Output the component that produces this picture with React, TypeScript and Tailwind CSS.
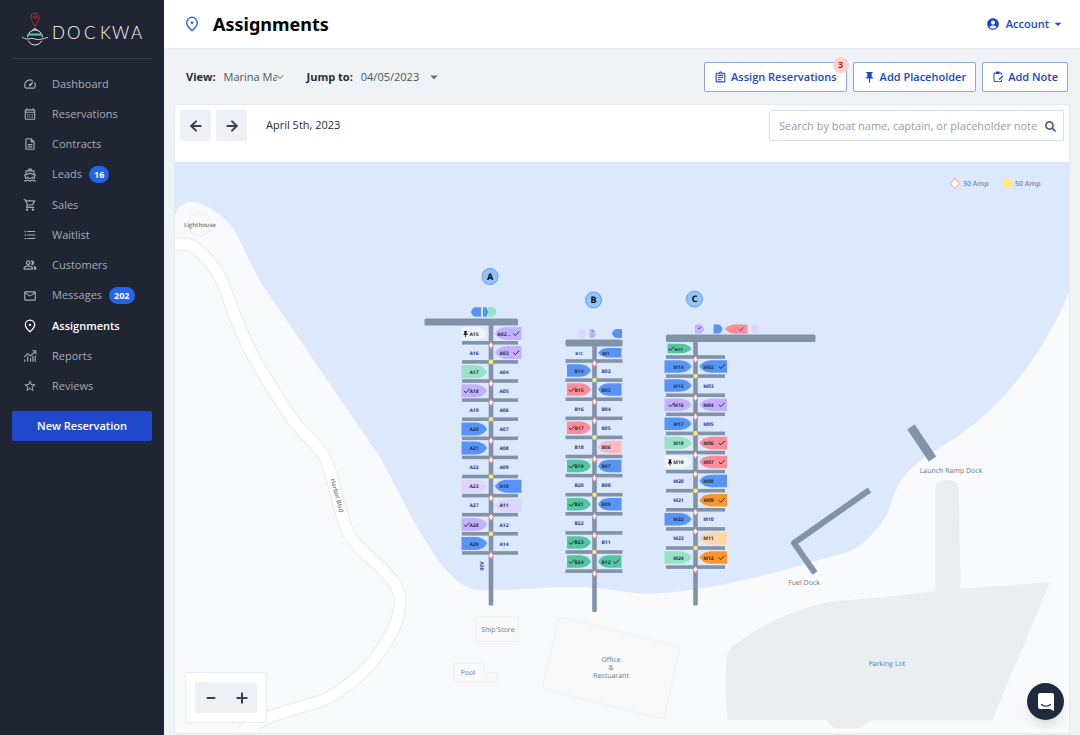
import { useState } from "react";
import type { ComponentType } from "react";
import { ArrowLeft, ArrowRight, ChevronDown, Minus, Plus } from "lucide-react";
import { FaSearch } from "react-icons/fa";
import {
    MdAccountCircle,
    MdArrowDropDown,
    MdFormatListBulleted,
    MdOutlineAssignment,
    MdOutlineCalendarMonth,
    MdOutlineDescription,
    MdOutlineDirectionsBoat,
    MdOutlineMail,
    MdOutlinePeopleAlt,
    MdOutlineShoppingCart,
    MdOutlineSpeed,
    MdPushPin,
    MdStarOutline,
} from "react-icons/md";

type Icon = ComponentType<{ className?: string }>;

const PlaceIcon = ({ className }: { className?: string }) => (
    <svg viewBox="0 0 24 24" fill="none" stroke="currentColor" className={className}>
        <path d="M12 22c-4.500-4-8-8-8-12a8 8 0 0 1 16 0c0 4-3.500 8-8 12z" strokeWidth="2.200" />
        <circle cx="12" cy="10" r="2" fill="currentColor" stroke="none" />
    </svg>
);

const ReportsIcon = ({ className }: { className?: string }) => (
    <svg viewBox="0 0 24 24" fill="none" stroke="currentColor" className={className}>
        <path d="M2 14l6-6 5 4 8-8" strokeWidth="2" />
        <path d="M16 3h6v6" strokeWidth="2" />
        <path d="M3 22v-4M8 22v-9M13 22v-6M17 22V12M21 22V11" strokeWidth="2" />
    </svg>
);

const NoteIcon = ({ className }: { className?: string }) => (
    <svg viewBox="0 0 24 24" fill="none" stroke="currentColor" strokeWidth="2" className={className}>
        <path d="M12 21H4V4h15v4" />
        <path d="M8 1h7v5H8z" fill="currentColor" stroke="none" />
        <path d="M13 21h6v-4" />
        <path d="M14 17l8-7" strokeWidth="3" />
    </svg>
);

interface NavItem {
    label: string;
    icon: Icon;
    badge?: number;
}

const navItems: NavItem[] = [
    { label: "Dashboard", icon: MdOutlineSpeed },
    { label: "Reservations", icon: MdOutlineCalendarMonth },
    { label: "Contracts", icon: MdOutlineDescription },
    { label: "Leads", icon: MdOutlineDirectionsBoat, badge: 16 },
    { label: "Sales", icon: MdOutlineShoppingCart },
    { label: "Waitlist", icon: MdFormatListBulleted },
    { label: "Customers", icon: MdOutlinePeopleAlt },
    { label: "Messages", icon: MdOutlineMail, badge: 202 },
    { label: "Assignments", icon: PlaceIcon },
    { label: "Reports", icon: ReportsIcon },
    { label: "Reviews", icon: MdStarOutline },
];

const Logo = () => (
    <svg viewBox="0 0 124 36" className="w-[124px] h-[36px]" fill="none">
        <path d="M14 15.500c-2-4-4-6-4-9.500a4 4 0 0 1 8 0c0 3.500-2 5.500-4 9.500z" stroke="#c0272d" />
        <circle cx="14" cy="6" r="1.500" stroke="#c0272d" />
        <circle cx="14" cy="26.500" r="7.500" stroke="#e5e7eb" />
        <path d="M8 22.500h12l1 2H7z" fill="#4fd1b5" />
        <path
            d="M1 26.500c2 0 3 2 6 1.500s4-1 7 0 4 .5 7 0 4-1.500 6-1.500"
            stroke="#1f2532"
            strokeWidth="3"
        />
        <path d="M1 26.500c2 0 3 2 6 1.500s4-1 7 0 4 .5 7 0 4-1.500 6-1.500" stroke="#d1d5db" />
        <path d="M11.500 19l2.500-1.500 2.500 1.500" stroke="#e5e7eb" />
        <text
            x="31 46 63 79 91 110"
            y="28"
            fill="#fff"
            fontSize="17"
            className="font-['Lato',sans-serif] font-light"
        >
            DOCKWA
        </text>
    </svg>
);

const Sidebar = () => (
    <aside className="w-[164px] shrink-0 bg-[#1f2532] px-3 flex flex-col">
        <div className="h-[59px] pt-[11px] pl-[9px] border-b border-[#343b4a]">
            <a href="#" aria-label="Dockwa home" className="block">
                <Logo />
            </a>
        </div>
        <nav className="flex flex-col pt-[10px]">
            {navItems.map(({ label, icon: ItemIcon, badge }) => {
                const active = label === "Assignments";
                return (
                    <a
                        key={label}
                        href="#"
                        aria-current={active ? "page" : undefined}
                        className={`flex items-center pl-[11px] text-[11px] ${badge ? "h-[31px]" : "h-[30px]"} ${
                            active ? "text-white font-semibold" : "text-[#a3acba]"
                        }`}
                    >
                        <ItemIcon className="size-[14px] mr-[15px]" />
                        {label}
                        {badge && (
                            <span className="ml-[7px] px-[5px] h-[17px] leading-[17px] rounded-full bg-[#2563eb] text-white text-[9px] font-bold">
                                {badge}
                            </span>
                        )}
                    </a>
                );
            })}
        </nav>
        <button className="mt-[10px] h-[30px] rounded-xs bg-[#1f48cc] text-white text-[11px] font-semibold">
            New Reservation
        </button>
    </aside>
);

const boatColors = {
    blue: "#5894f8",
    mint: "#98e3c5",
    purple: "#c4b1fc",
    lilac: "#ddd5fd",
    green: "#52c5a2",
    red: "#fb8c98",
    pink: "#fdb9bf",
    orange: "#fd9527",
    peach: "#fdd5a6",
    white: "#f2f3f5",
};

type BoatColor = keyof typeof boatColors;

interface Slip {
    name: string;
    boat?: BoatColor;
    mark?: "check" | "pin";
}

const slip = (name: string, boat?: BoatColor, mark?: "check" | "pin"): Slip => ({ name, boat, mark });

interface Pier {
    id: string;
    x: number;
    labelY: number;
    head: [number, number, number, number];
    end: number;
    firstFinger: number;
    fingers: [number, number];
    rows: number[];
    reach: [number, number];
    left: (Slip | null)[];
    right: (Slip | null)[];
}

const SPACING = 19.1;

const rowsFrom = (first: number, count: number) => Array.from({ length: count }, (_, i) => first + i * SPACING);

const piers: Pier[] = [
    {
        id: "A",
        x: 491,
        labelY: 276.500,
        head: [424.500, 318.500, 93.500, 7],
        end: 605.500,
        firstFinger: 342.800,
        fingers: [462, 518],
        rows: rowsFrom(333.500, 12),
        reach: [461.500, 521.500],
        left: [
            slip("A15", "white", "pin"),
            slip("A16"),
            slip("A17", "mint"),
            slip("A18", "purple", "check"),
            slip("A19"),
            slip("A20", "blue"),
            slip("A21", "blue"),
            slip("A22"),
            slip("A23", "lilac"),
            slip("A27"),
            slip("A28", "purple", "check"),
            slip("A29", "blue"),
        ],
        right: [
            slip("A02 ..", "purple", "check"),
            slip("A03", "purple", "check"),
            slip("A04"),
            slip("A05"),
            slip("A06"),
            slip("A07"),
            slip("A08"),
            slip("A09"),
            slip("A10", "blue"),
            slip("A11", "lilac"),
            slip("A12"),
            slip("A14"),
        ],
    },
    {
        id: "B",
        x: 594.500,
        labelY: 300,
        head: [565.500, 339.500, 57, 7],
        end: 612,
        firstFinger: 361,
        fingers: [565.500, 622.500],
        rows: [352.800, ...rowsFrom(370.500, 11)],
        reach: [567, 621.500],
        left: [
            slip("B13"),
            slip("B14", "blue"),
            slip("B15", "red", "check"),
            slip("B16"),
            slip("B17", "red", "check"),
            slip("B18"),
            slip("B19", "green", "check"),
            slip("B20"),
            slip("B21", "green", "check"),
            slip("B22"),
            slip("B23", "green", "check"),
            slip("B24", "green", "check"),
        ],
        right: [
            slip("B01", "blue"),
            slip("B02"),
            slip("B03", "blue"),
            slip("B04"),
            slip("B05"),
            slip("B06", "pink"),
            slip("B07", "blue"),
            slip("B08"),
            slip("B09", "blue"),
            null,
            slip("B11"),
            slip("B12", "green", "check"),
        ],
    },
    {
        id: "C",
        x: 695.500,
        labelY: 299,
        head: [666, 334.500, 149.500, 7.500],
        end: 605.500,
        firstFinger: 357,
        fingers: [666, 725],
        rows: [348.500, ...rowsFrom(366.500, 11)],
        reach: [664.500, 727],
        left: [
            slip("M13", "green", "check"),
            slip("M14", "blue"),
            slip("M15", "blue"),
            slip("M16", "purple", "check"),
            slip("M17", "blue"),
            slip("M18", "mint"),
            slip("M19", "white", "pin"),
            slip("M20"),
            slip("M21"),
            slip("M22", "blue"),
            slip("M23"),
            slip("M24", "mint"),
        ],
        right: [
            null,
            slip("M02", "blue", "check"),
            slip("M03"),
            slip("M04", "purple", "check"),
            slip("M05"),
            slip("M06", "red", "check"),
            slip("M07", "red", "check"),
            slip("M08", "blue"),
            slip("M09", "orange", "check"),
            slip("M10"),
            slip("M11", "peach"),
            slip("M12", "orange", "check"),
        ],
    },
];

// Hull with a flat stern at `stern` and a rounded bow at `bow`
const hull = (stern: number, bow: number, y: number, h: number) => {
    const shoulder = stern + (bow - stern) * 0.55;
    const bend = stern + (bow - stern) * 0.85;
    const r = h / 2;
    return `M${stern} ${y - r}H${shoulder}Q${bend} ${y - r} ${bow} ${y}Q${bend} ${y + r} ${shoulder} ${y + r}H${stern}Z`;
};

const Check = ({ x, y }: { x: number; y: number }) => (
    <path d={`M${x - 2.500} ${y}l1.800 2 4-4`} fill="none" stroke="#262f3d" strokeWidth="1" />
);

const Pin = ({ x, y }: { x: number; y: number }) => (
    <path
        d={`M${x - 1.500} ${y - 2.500}h3v0.800h-0.500v1.500l1 1v0.600h-1.600v2h-0.800v-2h-1.600v-0.600l1-1v-1.500h-0.500z`}
        fill="#111827"
    />
);

const SlipShape = ({ data, pier, y, side, small }: { data: Slip; pier: Pier; y: number; side: number; small: boolean }) => {
    const stern = side < 0 ? pier.reach[0] : pier.reach[1];
    const bow = pier.x + side * (pier.id === "B" ? 3.500 : 3.800);
    const inset = small && pier.id === "C" ? 3 : 0;
    const height = small ? 9.500 : pier.id === "A" ? 13 : 12.500;
    const offset = pier.id === "B" ? 11.500 : side < 0 ? 17 : 13;
    const textX = pier.x + side * (side < 0 && pier.id === "B" ? 15.500 : offset);
    const markX = side < 0 ? textX - 7.500 : stern - 5.500;
    return (
        <g>
            {data.boat && <path d={hull(stern + inset, bow, y, height)} fill={boatColors[data.boat]} />}
            <text
                x={textX}
                y={y + 2}
                textAnchor="middle"
                fontSize={small ? 4 : 5}
                fill={data.boat ? "#28324a" : "#263c96"}
                className="font-bold"
            >
                {data.name}
            </text>
            {data.mark === "check" && <Check x={markX} y={y} />}
            {data.mark === "pin" && <Pin x={markX - 1} y={y} />}
        </g>
    );
};

const Amp30 = ({ x, y }: { x: number; y: number }) => (
    <path d={`M${x} ${y - 3.400}l2.300 3.400-2.300 3.400-2.300-3.400z`} fill="#fff" stroke="#f47c80" strokeWidth="0.800" />
);

const PierShape = ({ pier }: { pier: Pier }) => {
    const [hx, hy, hw, hh] = pier.head;
    return (
        <g>
            <rect x={hx} y={hy} width={hw} height={hh} rx="1.500" fill="#8293a9" />
            <rect x={pier.x - 2.300} y={hy + 3} width="4.600" height={pier.end - hy - 3} rx="1" fill="#8293a9" />
            {Array.from({ length: 12 }, (_, i) => (
                <rect
                    key={i}
                    x={pier.fingers[0]}
                    y={pier.firstFinger + i * SPACING - 1.800}
                    width={pier.fingers[1] - pier.fingers[0]}
                    height="3.600"
                    fill="#8293a9"
                />
            ))}
            {Array.from({ length: 12 }, (_, i) => {
                const y = pier.firstFinger + i * SPACING;
                return i % 3 === 1 ? (
                    <circle key={i} cx={pier.x} cy={y} r="2.300" fill="#fbe773" />
                ) : (
                    <Amp30 key={i} x={pier.x} y={y + 2.500} />
                );
            })}
            {pier.rows.map((y, i) => {
                const left = pier.left[i];
                const right = pier.right[i];
                const small = i === 0 && pier.id !== "A";
                return (
                    <g key={i}>
                        {left && <SlipShape data={left} pier={pier} y={y} side={-1} small={small} />}
                        {right && <SlipShape data={right} pier={pier} y={y} side={1} small={small} />}
                    </g>
                );
            })}
            <circle cx={pier.x - 1} cy={pier.labelY} r="8" fill="#93c3fb" stroke="#639cf4" strokeWidth="1" />
            <text x={pier.x - 1} y={pier.labelY + 3} textAnchor="middle" fontSize="9" fill="#000" className="font-bold">
                {pier.id}
            </text>
        </g>
    );
};

const ROAD =
    "M170 244H184C192 244 197 249 202 254C210 261 216 269 221 279C229 297 236 322 248 346C258 366 276 395 293 420C302 432 316 443 324 456C334 474 337 505 347 530C356 551 383 565 394 583C404 598 400 608 396 622C391 638 375 660 364 671C352 682 334 697 318 702C302 707 286 711 272 716C260 721 250 726 238 735";

const MarinaMap = () => (
    <svg
        viewBox="175 162 894 567"
        className="block w-full h-auto bg-[#f9fafb] [text-rendering:geometricPrecision]"
        role="img"
        aria-label="Marina map"
    >
        <path
            d="M174 162H1070V290C1056 325 1032 366 1000 400C978 424 950 442 936 450C918 461 901 474 893 497C889 512 884 522 873 533C860 550 845 553 830 557C800 566 760 577 734 582C700 590 660 595 635 593C612 591 605 587 575 587C540 587 520 590 485 590C466 590 459 585 440 563C415 528 400 494 381 459L261 283C246 256 243 244 232 227C226 218 206 202 191 202C181 202 174 211 174 222Z"
            fill="#dce9fd"
        />

        {/* Harbor Blvd */}
        <g fill="none" strokeLinejoin="round">
            <path d={ROAD} stroke="#ebebeb" strokeWidth="13" />
            <path d={ROAD} stroke="#fff" strokeWidth="11" />
        </g>

        {/* Parking lot and ramp */}
        <path
            d="M728 720Q724 690 726 665Q726 652 732 647Q770 616 824 603Q830 601 850 600Q900 596 935.500 591V487Q936 480 947 480Q958 480 959 487L960.500 588.500L1050 582.500L992 720.500H871L859 728.700H835L826 720Z"
            fill="#ebeef0"
        />

        {/* Buildings */}
        <g fill="#f9f9f9" stroke="#f0f0f1" strokeWidth="1">
            <circle cx="199.500" cy="224" r="12" />
            <rect x="475.500" y="616.500" width="42.500" height="25" />
            <path d="M453.500 663.500h31v9h12.500v9.500h-43.500z" />
            <path d="M565 618L676 646Q681 648 679 653L665 715Q664 719 659 718L547 690Q542 688 543 684L558 622Q560 617 565 618Z" />
        </g>

        {/* Standalone docks */}
        <g fill="none" stroke="#8293a9" strokeLinejoin="round">
            <path d="M911 427L932.500 459" strokeWidth="9" />
            <path d="M869.500 490L794 543L815 573" strokeWidth="6" />
        </g>

        {/* T-head boats */}
        <path d={hull(481, 471, 312, 9.500)} fill={boatColors.blue} />
        <path d={hull(483, 488, 312, 9.500)} fill={boatColors.blue} />
        <path d={hull(488, 496.500, 312, 9.500)} fill={boatColors.mint} />
        <path d={hull(579, 586, 333.500, 9)} fill={boatColors.lilac} />
        <path d={hull(589.500, 595.500, 333.500, 9)} fill={boatColors.purple} />
        <path d={hull(622, 612, 333.500, 9)} fill={boatColors.blue} />
        <path d={hull(695, 704, 329, 9)} fill={boatColors.purple} />
        <path d={hull(713.500, 722.500, 329, 9)} fill={boatColors.blue} />
        <path d={hull(747.500, 725, 329, 9)} fill={boatColors.red} />
        <path d={hull(758.500, 750.500, 329, 9)} fill={boatColors.lilac} />
        <path d="M698 328l1 1 2-2.500M739 329l1.500 1.500 3-3M592 331l.5.5 1-1" fill="none" stroke="#44405f" strokeWidth="0.800" />

        {piers.map((pier) => (
            <PierShape key={pier.id} pier={pier} />
        ))}
        <text transform="translate(480 566) rotate(90)" textAnchor="middle" fontSize="5" fill="#263c96" className="font-bold">
            A30
        </text>

        <g fill="#6b798d" fontSize="7" textAnchor="middle">
            <text x="200" y="227" fontSize="6" className="font-semibold">Lighthouse</text>
            <text transform="translate(335 496) rotate(75)" fontSize="6" className="font-semibold">Harbor Blvd</text>
            <text x="498" y="632">Ship Store</text>
            <text x="468" y="675">Pool</text>
            <text x="611" y="662">Office</text>
            <text x="611" y="670">&amp;</text>
            <text x="611" y="678">Restuarant</text>
            <text x="951" y="473">Launch Ramp Dock</text>
            <text x="804" y="585">Fuel Dock</text>
            <text x="887" y="666">Parking Lot</text>
        </g>

        {/* Legend */}
        <path d="M955 178l4.500 5.500-4.500 5.500-4.500-5.500z" fill="#fff" stroke="#f87c80" strokeWidth="0.800" />
        <circle cx="1007.500" cy="183.500" r="5" fill="#fdec80" />
        <g fill="#76849a" fontSize="7" className="font-semibold">
            <text x="963" y="186">30 Amp</text>
            <text x="1015" y="186">50 Amp</text>
        </g>
    </svg>
);

const outlineButton =
    "relative flex items-center h-[30px] px-[9px] gap-1 rounded-xs border border-[#8fa3df] bg-white text-[#1d46c8] text-[11px] font-semibold";

const App = () => {
    const [query, setQuery] = useState("");

    return (
        <div className="flex min-h-screen overflow-hidden bg-[#eff3f6] text-[#272c35] text-[11px] font-['Open_Sans','Noto_Sans',sans-serif]">
            <Sidebar />

            <main className="flex-1 min-w-0 flex flex-col">
                <header className="flex items-center justify-between h-[49px] pl-5 pr-[14px] bg-white border-b border-[#e5eaf0]">
                    <div className="flex items-center gap-[13px]">
                        <PlaceIcon className="size-4 text-[#2f6df2]" />
                        <h1 className="text-[18px] font-bold text-black font-['Noto_Sans',sans-serif]">Assignments</h1>
                    </div>
                    <button className="flex items-center text-[#1d46c8] font-semibold">
                        <MdAccountCircle className="size-[14px] mr-[6px]" />
                        Account
                        <MdArrowDropDown className="size-4 ml-[1px]" />
                    </button>
                </header>

                <div className="flex items-center h-[55px] pt-[1px] pl-[22px] pr-3">
                    <label htmlFor="view" className="font-bold">
                        View:
                    </label>
                    <div className="flex items-center ml-2">
                        <select id="view" className="appearance-none w-[53px] bg-transparent text-[#4b5361]">
                            <option>Marina Map</option>
                        </select>
                        <ChevronDown className="size-3 -ml-[3px] text-[#5b6472]" strokeWidth={2} />
                    </div>
                    <label htmlFor="jump" className="ml-[21px] font-bold">
                        Jump to:
                    </label>
                    <input id="jump" defaultValue="04/05/2023" className="w-[64px] ml-2 bg-transparent text-[#4b5361]" />
                    <MdArrowDropDown className="size-[18px] text-[#5b6b80]" />

                    <div className="flex gap-[6px] ml-auto">
                        <button className={outlineButton}>
                            <MdOutlineAssignment className="size-[13px]" />
                            Assign Reservations
                            <span className="absolute -top-[6px] -right-[3px] size-4 leading-4 rounded-full bg-[#fdcfd0] text-[#b91c1c] text-[9px] font-bold">
                                3
                            </span>
                        </button>
                        <button className={outlineButton}>
                            <MdPushPin className="size-[13px]" />
                            Add Placeholder
                        </button>
                        <button className={outlineButton}>
                            <NoteIcon className="size-3" />
                            Add Note
                        </button>
                    </div>
                </div>

                <section className="mx-[10px] pb-1 bg-white border border-[#e3eaf1] rounded-sm">
                    <div className="flex items-start h-[57px] pt-[5px] px-[5px]">
                        <button aria-label="Previous day" className="grid place-items-center size-[31px] bg-[#edf1f5] rounded-xs">
                            <ArrowLeft className="size-4 text-[#354052]" strokeWidth={3} />
                        </button>
                        <button aria-label="Next day" className="grid place-items-center size-[31px] ml-[5px] bg-[#edf1f5] rounded-xs">
                            <ArrowRight className="size-4 text-[#354052]" strokeWidth={3} />
                        </button>
                        <p className="ml-[19px] leading-[30px] font-medium">April 5th, 2023</p>
                        <div className="relative ml-auto w-[295px]">
                            <input
                                type="text"
                                aria-label="Search by boat name, captain, or placeholder note"
                                placeholder="Search by boat name, captain, or placeholder note"
                                value={query}
                                onChange={(e) => setQuery(e.target.value)}
                                className="w-full h-[31px] pl-[9px] pr-6 border border-[#d7dfe9] rounded-xs placeholder:text-[#9a9da3]"
                            />
                            <FaSearch className="absolute right-2 top-[11px] size-[11px] text-[#56657a]" />
                        </div>
                    </div>

                    <div className="relative">
                        <MarinaMap />
                        <div className="absolute left-[10px] bottom-[6px] p-[9px] bg-white border border-[#e8ecf0] rounded-xs">
                            <div className="flex w-[62px] h-[31px] bg-[#edf1f5] rounded-xs">
                                <button aria-label="Zoom out" className="flex-1 grid place-items-center">
                                    <Minus className="size-3 text-[#33415a]" strokeWidth={4} />
                                </button>
                                <button aria-label="Zoom in" className="flex-1 grid place-items-center">
                                    <Plus className="size-4 text-[#33415a]" strokeWidth={3} />
                                </button>
                            </div>
                        </div>
                    </div>
                </section>
            </main>

            <button
                aria-label="Open chat"
                className="fixed right-4 bottom-[15px] grid place-items-center size-[37px] rounded-full bg-[#1f2a3c] shadow-lg"
            >
                <svg viewBox="0 0 18 20" className="w-[18px] h-5">
                    <path d="M3 1h12a2 2 0 0 1 2 2v16l-4-2H3a2 2 0 0 1-2-2V3a2 2 0 0 1 2-2z" fill="#fff" />
                    <path d="M4.500 12.500q4.500 3.500 9 0" fill="none" stroke="#1f2a3c" strokeWidth="1.200" strokeLinecap="round" />
                </svg>
            </button>
        </div>
    );
};

export default App;
